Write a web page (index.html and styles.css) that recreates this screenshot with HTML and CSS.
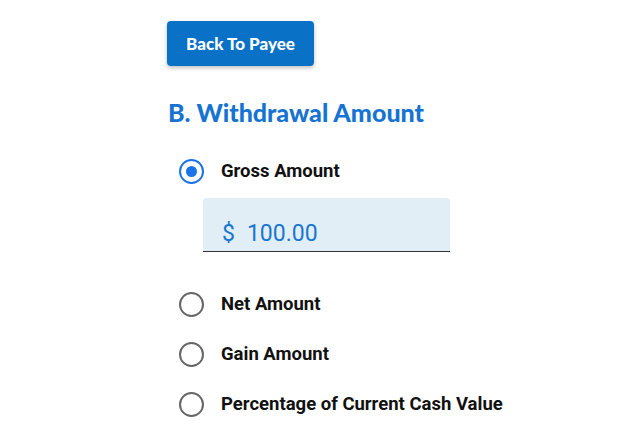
FILE: index.html
```html
<!DOCTYPE html>
<html lang="en">
<head>
  <meta charset="UTF-8">
  <meta name="viewport" content="width=device-width, initial-scale=1.0">
  <title>Withdrawal Amount</title>
  <link rel="stylesheet" href="styles.css">
</head>
<body>
  <div class="container">
    <button class="back-btn" type="button">Back To Payee</button>

    <h2 class="section-title">B. Withdrawal Amount</h2>

    <div class="options">
      <label class="option checked">
        <span class="radio"></span>
        <span class="option-label">Gross Amount</span>
      </label>

      <div class="amount-field">
        <span class="currency">$</span>
        <span class="amount">100.00</span>
      </div>

      <label class="option">
        <span class="radio"></span>
        <span class="option-label">Net Amount</span>
      </label>
      <label class="option">
        <span class="radio"></span>
        <span class="option-label">Gain Amount</span>
      </label>
      <label class="option">
        <span class="radio"></span>
        <span class="option-label">Percentage of Current Cash Value</span>
      </label>
    </div>
  </div>
</body>
</html>
```

FILE: styles.css
```css
/* Base Styling */
body {
  margin: 0;
  padding: 0;
  background: #fff;
  font-family: Roboto, "Liberation Sans", sans-serif;
}

.container {
  padding: 21px 0 0 167px;
}

.back-btn {
  display: block;
  width: 147px;
  height: 45px;
  background: #0a72c6;
  color: #fff;
  border: none;
  border-radius: 4px;
  box-shadow: 0 2px 4px rgba(0, 0, 0, 0.25);
  font-family: Lato, sans-serif;
  font-size: 17px;
  font-weight: 900;
  cursor: pointer;
}

.section-title {
  margin: 31px 0 0 1px;
  font-family: Lato, sans-serif;
  font-size: 25px;
  font-weight: 900;
  color: #1673d2;
  line-height: 30px;
}

.options {
  margin-top: 19px;
  display: flex;
  flex-direction: column;
}

.option {
  display: flex;
  align-items: center;
  height: 50px;
  gap: 17px;
  margin-left: 12px;
  cursor: pointer;
}

.radio {
  box-sizing: border-box;
  width: 25px;
  height: 25px;
  border: 2px solid #666;
  border-radius: 50%;
  display: flex;
  align-items: center;
  justify-content: center;
}

.option.checked .radio {
  border-color: #1a73e8;
}

.option.checked .radio::after {
  content: "";
  width: 11px;
  height: 11px;
  border-radius: 50%;
  background: #1a73e8;
}

.option-label {
  font-size: 18.5px;
  font-weight: 700;
  color: #111;
}

.amount-field {
  box-sizing: border-box;
  width: 247px;
  height: 54px;
  margin: 2px 0 27px 36px;
  padding: 22px 0 0 19px;
  background: #e2eef6;
  border-bottom: 1px solid #333;
  border-radius: 4px 4px 0 0;
  color: #1976d2;
  font-size: 23px;
  line-height: 27px;
  display: flex;
  gap: 12px;
}
```
